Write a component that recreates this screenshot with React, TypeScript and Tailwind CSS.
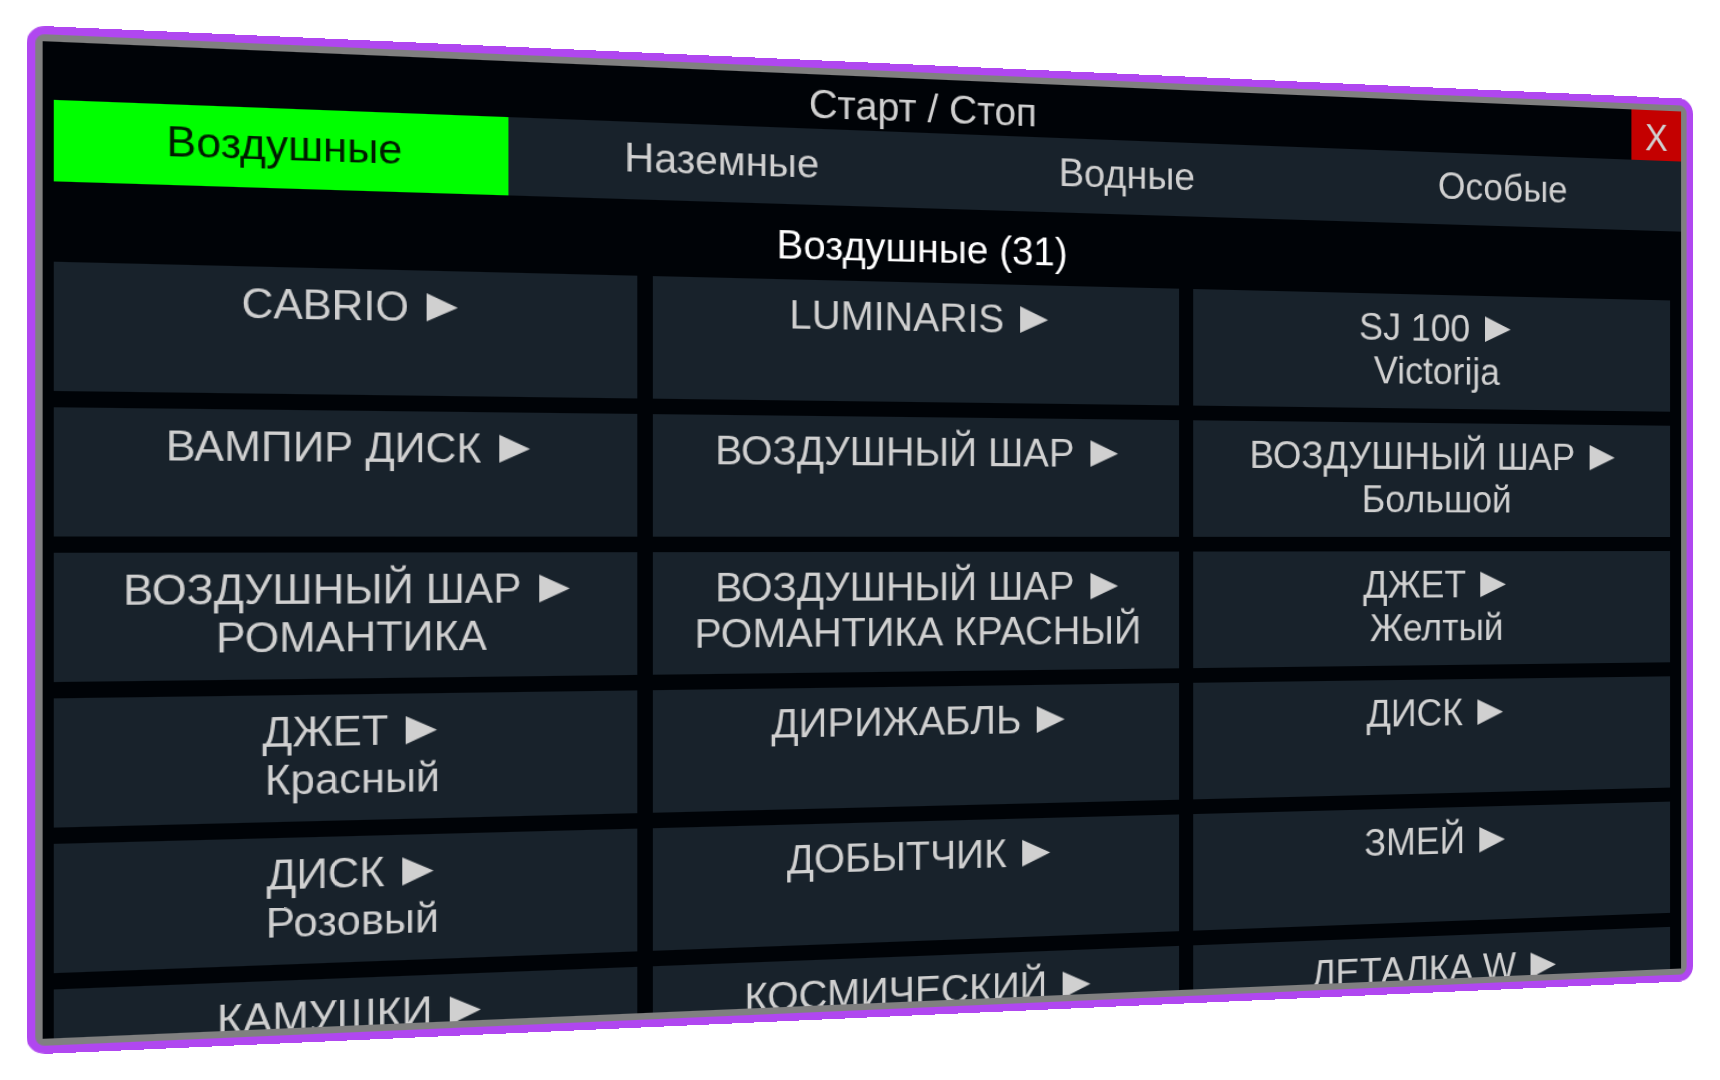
import { useState } from 'react';
import clsx from 'clsx';

interface Ride {
  name: string;
  variant?: string;
}

const TABS = ['Воздушные', 'Наземные', 'Водные', 'Особые'];

const RIDES: Ride[] = [
  { name: 'CABRIO' },
  { name: 'LUMINARIS' },
  { name: 'SJ 100', variant: 'Victorija' },
  { name: 'ВАМПИР ДИСК' },
  { name: 'ВОЗДУШНЫЙ ШАР' },
  { name: 'ВОЗДУШНЫЙ ШАР', variant: 'Большой' },
  { name: 'ВОЗДУШНЫЙ ШАР', variant: 'РОМАНТИКА' },
  { name: 'ВОЗДУШНЫЙ ШАР', variant: 'РОМАНТИКА КРАСНЫЙ' },
  { name: 'ДЖЕТ', variant: 'Желтый' },
  { name: 'ДЖЕТ', variant: 'Красный' },
  { name: 'ДИРИЖАБЛЬ' },
  { name: 'ДИСК' },
  { name: 'ДИСК', variant: 'Розовый' },
  { name: 'ДОБЫТЧИК' },
  { name: 'ЗМЕЙ' },
  { name: 'КАМУШКИ' },
  { name: 'КОСМИЧЕСКИЙ' },
  { name: 'ЛЕТАЛКА W' },
];

function PlayIcon() {
  return (
    <svg viewBox="0 0 27 25" className="inline-block w-[27px] h-[25px] ml-[5px] mr-1 align-baseline" aria-hidden="true">
      <path d="M0 0L27 12.5L0 25Z" fill="currentColor" />
    </svg>
  );
}

function RideCard({ ride }: { ride: Ride }) {
  return (
    <button
      type="button"
      className="flex flex-col items-center justify-start h-[111px] pt-3 bg-[#18222b] overflow-hidden whitespace-nowrap"
    >
      <span>
        {ride.name} <PlayIcon />
      </span>
      {ride.variant && <span>{ride.variant}</span>}
    </button>
  );
}

export default function App() {
  const [active, setActive] = useState(TABS[0]);

  return (
    <main className="h-screen flex items-center pl-[130px] pr-[27px] bg-white overflow-hidden">
      {/* Tilted screen: the right edge stays in place, the left comes forward */}
      <div className="w-full h-[calc(100vh-198px)] origin-right [transform:perspective(4440px)_rotateY(24deg)] rounded-[15px] border-[7px] border-[#b047f0] bg-[#b047f0]">
        <div className="h-full rounded-lg border-[6px] border-[#808080] bg-[#808080]">
          <div className="h-full overflow-hidden bg-[#000307] text-[#d0d0d0] text-[37px] leading-[42px] font-['Liberation_Sans',Arial,sans-serif]">
            <header className="grid grid-cols-[54px_1fr_54px] h-[50px]">
              <h1 className="col-start-2 pt-[7px] text-center">Старт / Стоп</h1>
              <button type="button" className="flex justify-center pt-[7px] bg-[#c40000]">
                X
              </button>
            </header>

            <nav className="grid grid-cols-4 ml-[9px] bg-[#18222b]">
              {TABS.map((tab) => (
                <button
                  key={tab}
                  type="button"
                  onClick={() => setActive(tab)}
                  className={clsx(
                    'flex justify-center h-[70px] pt-3',
                    tab === active && 'bg-[#00ff00] text-[#001a00]'
                  )}
                >
                  {tab}
                </button>
              ))}
            </nav>

            <h2 className="h-[69px] pt-[17px] text-center text-white">{active} (31)</h2>

            <div className="grid grid-cols-3 gap-[14px] pl-[9px] pr-3">
              {RIDES.map((ride, i) => (
                <RideCard key={i} ride={ride} />
              ))}
            </div>
          </div>
        </div>
      </div>
    </main>
  );
}
